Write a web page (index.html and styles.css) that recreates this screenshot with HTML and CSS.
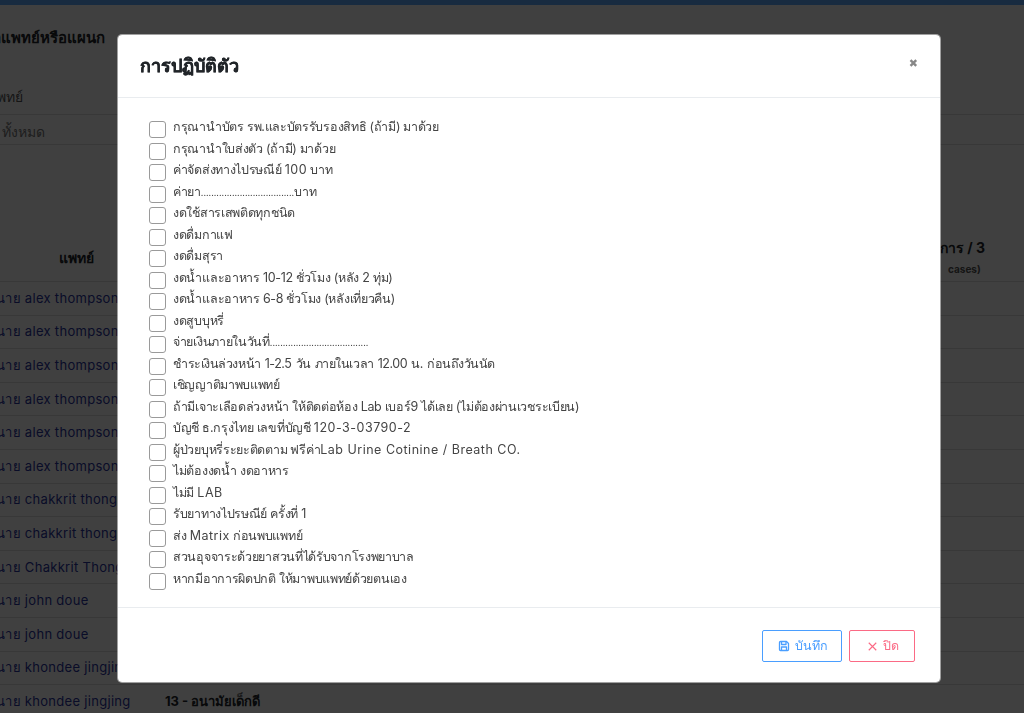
FILE: index.html
```html
<!DOCTYPE html>
<html lang="th">
<head>
    <meta charset="UTF-8">
    <meta name="viewport" content="width=device-width, initial-scale=1.0">
    <title>การปฏิบัติตัว</title>
    <link rel="stylesheet" href="styles.css">
</head>
<body>
    <div class="topbar"></div>
    <div class="page">
        <h4 class="filter-title">เลือกแพทย์หรือแผนก</h4>
        <div class="filter-label">แพทย์</div>
        <div class="filter-value">ทั้งหมด</div>

        <div class="table-head">
            <div class="col-doctor">แพทย์</div>
            <div class="col-place"></div>
            <div class="col-last">
                <div class="col-last-main">ค่าบริการ / 3</div>
                <div class="col-last-sub">cases)</div>
            </div>
        </div>
        <div class="row"><a class="col-doctor">นาย alex thompson</a></div>
        <div class="row"><a class="col-doctor">นาย alex thompson</a></div>
        <div class="row"><a class="col-doctor">นาย alex thompson</a></div>
        <div class="row"><a class="col-doctor">นาย alex thompson</a></div>
        <div class="row"><a class="col-doctor">นาย alex thompson</a></div>
        <div class="row"><a class="col-doctor">นาย alex thompson</a></div>
        <div class="row"><a class="col-doctor">นาย chakkrit thong</a></div>
        <div class="row"><a class="col-doctor">นาย chakkrit thong</a></div>
        <div class="row"><a class="col-doctor">นาย Chakkrit Thong</a></div>
        <div class="row"><a class="col-doctor">นาย john doue</a></div>
        <div class="row"><a class="col-doctor">นาย john doue</a></div>
        <div class="row"><a class="col-doctor">นาย khondee jingjing</a></div>
        <div class="row"><a class="col-doctor">นาย khondee jingjing</a><b class="col-place">13 - อนามัยเด็กดี</b></div>
    </div>

    <div class="backdrop"></div>
    <div class="modal">
        <div class="modal-header">
            <h5>การปฏิบัติตัว</h5>
            <span class="modal-close">&#10006;</span>
        </div>
        <div class="modal-body">
            <label class="check"><input type="checkbox"><span>กรุณานำบัตร รพ.และบัตรรับรองสิทธิ (ถ้ามี) มาด้วย</span></label>
            <label class="check"><input type="checkbox"><span>กรุณานำใบส่งตัว (ถ้ามี) มาด้วย</span></label>
            <label class="check"><input type="checkbox"><span>ค่าจัดส่งทางไปรษณีย์ <span class="latin">100</span> บาท</span></label>
            <label class="check"><input type="checkbox"><span>ค่ายา<span class="dots">....................................</span>บาท</span></label>
            <label class="check"><input type="checkbox"><span>งดใช้สารเสพติดทุกชนิด</span></label>
            <label class="check"><input type="checkbox"><span>งดดื่มกาแฟ</span></label>
            <label class="check"><input type="checkbox"><span>งดดื่มสุรา</span></label>
            <label class="check"><input type="checkbox"><span>งดน้ำและอาหาร 10-12 ชั่วโมง (หลัง 2 ทุ่ม)</span></label>
            <label class="check"><input type="checkbox"><span>งดน้ำและอาหาร 6-8 ชั่วโมง (หลังเที่ยวคืน)</span></label>
            <label class="check"><input type="checkbox"><span>งดสูบบุหรี่</span></label>
            <label class="check"><input type="checkbox"><span>จ่ายเงินภายในวันที่<span class="dots">......................................</span></span></label>
            <label class="check"><input type="checkbox"><span class="tight">ชำระเงินล่วงหน้า 1-2.5 วัน ภายในเวลา 12.00 น. ก่อนถึงวันนัด</span></label>
            <label class="check"><input type="checkbox"><span>เชิญญาติมาพบแพทย์</span></label>
            <label class="check"><input type="checkbox"><span>ถ้ามีเจาะเลือดล่วงหน้า ให้ติดต่อห้อง Lab เบอร์9 ได้เลย (ไม่ต้องผ่านเวชระเบียน)</span></label>
            <label class="check"><input type="checkbox"><span>บัญชี ธ.กรุงไทย เลขที่บัญชี <span class="latin">120-3-03790-2</span></span></label>
            <label class="check"><input type="checkbox"><span>ผู้ป่วยบุหรี่ระยะติดตาม ฟรีค่า<span class="latin">Lab Urine Cotinine / Breath CO.</span></span></label>
            <label class="check"><input type="checkbox"><span>ไม่ต้องงดน้ำ งดอาหาร</span></label>
            <label class="check"><input type="checkbox"><span>ไม่มี <span class="latin">LAB</span></span></label>
            <label class="check"><input type="checkbox"><span>รับยาทางไปรษณีย์ ครั้งที่ <span class="latin">1</span></span></label>
            <label class="check"><input type="checkbox"><span>ส่ง <span class="latin">Matrix</span> ก่อนพบแพทย์</span></label>
            <label class="check"><input type="checkbox"><span>สวนอุจจาระด้วยยาสวนที่ได้รับจากโรงพยาบาล</span></label>
            <label class="check"><input type="checkbox"><span>หากมีอาการผิดปกติ ให้มาพบแพทย์ด้วยตนเอง</span></label>
        </div>
        <div class="modal-footer">
            <button class="btn btn-save">
                <svg width="12" height="12" viewBox="0 0 24 24" fill="none" stroke="currentColor" stroke-width="2.6" stroke-linejoin="round"><path d="M3 5a2 2 0 0 1 2-2h12l4 4v12a2 2 0 0 1-2 2H5a2 2 0 0 1-2-2z"/><path d="M7 3v6h9V3"/><path d="M7 21v-7h10v7"/></svg>
                บันทึก
            </button>
            <button class="btn btn-close">
                <svg width="9" height="9" viewBox="0 0 12 12" fill="none" stroke="currentColor" stroke-width="1.5"><path d="M1 1l10 10M11 1L1 11"/></svg>
                ปิด
            </button>
        </div>
    </div>
</body>
</html>
```

FILE: styles.css
```css
* {
    box-sizing: border-box;
}
html, body {
    height: 100%;
}
body {
    margin: 0;
    overflow: hidden;
    font-family: Inter, "Noto Sans", "DejaVu Sans", sans-serif;
    font-size: 14px;
    color: #212529;
    background-color: #ffffff;
}
.topbar {
    height: 5px;
    background-color: #60acff;
}
.page {
    margin-left: -48px;
    padding-top: 23px;
}
.filter-title {
    margin: 0 0 39px;
    padding-left: 17px;
    font-size: 15px;
    font-weight: 700;
    line-height: 20px;
}
.filter-label {
    padding-left: 36px;
    line-height: 20px;
    height: 28px;
    border-bottom: 1px solid #dddddd;
    color: #555555;
}
.filter-value {
    padding: 6px 0 0 50px;
    height: 30px;
    border-bottom: 1px solid #dddddd;
    color: #777777;
}
.table-head {
    display: flex;
    margin-top: 73px;
    height: 64px;
    padding-top: 16px;
    border-bottom: 1px solid #dddddd;
    font-weight: 700;
    align-items: center;
}
.table-head .col-doctor {
    text-align: center;
    padding-right: 8px;
}
.col-doctor {
    display: block;
    width: 213px;
    padding-left: 44px;
    flex: none;
}
.col-place {
    flex: none;
    width: 775px;
    font-size: 13px;
}
.col-last {
    text-align: left;
    white-space: nowrap;
}
.col-last-main {
    margin-left: -34px;
    line-height: 22px;
}
.col-last-sub {
    font-size: 10px;
    line-height: 20px;
    color: #555555;
    margin-left: 8px;
}
.row {
    display: flex;
    align-items: center;
    height: 33.6px;
    border-bottom: 1px solid #dddddd;
    white-space: nowrap;
}
.row a {
    font-size: 13px;
    color: #2a34a0;
    letter-spacing: 0.3px;
}
.backdrop {
    position: fixed;
    inset: 0;
    background-color: rgba(0, 0, 0, 0.75);
}
.modal {
    position: fixed;
    top: 34px;
    left: 117px;
    width: 824px;
    height: 649px;
    display: flex;
    flex-direction: column;
    background-color: #ffffff;
    background-clip: padding-box;
    border: 1px solid rgba(255, 255, 255, 0.5);
    border-radius: 5px;
}
.modal-header {
    display: flex;
    justify-content: space-between;
    height: 63px;
    padding: 18px 22px;
    border-bottom: 1px solid #e9ecef;
}
.modal-header h5 {
    margin: 0;
    font-size: 18px;
    font-weight: 700;
    line-height: 26px;
    color: #212529;
    -webkit-text-stroke: 0.3px #212529;
}
.modal-close {
    font-size: 11px;
    line-height: 20px;
    color: #888888;
}
.modal-body {
    flex: 1;
    padding: 19px 31px 0;
}
.check {
    display: flex;
    align-items: flex-start;
    height: 21.52px;
    font-size: 12.5px;
    line-height: 20px;
    letter-spacing: -0.3px;
    color: #444444;
}
.check input {
    appearance: none;
    width: 17px;
    height: 17px;
    margin: 4px 7px 0 0;
    flex: none;
    background-color: #ffffff;
    border: 1px solid #9a9a9a;
    border-radius: 3px;
}
.latin {
    letter-spacing: 0.5px;
}
.dots {
    font-size: 9px;
    letter-spacing: 0;
}
.tight {
    letter-spacing: -0.45px;
    word-spacing: 1px;
}
.modal-footer {
    display: flex;
    justify-content: flex-end;
    gap: 7px;
    height: 75px;
    padding: 22px 25px 0 0;
    border-top: 1px solid #e9ecef;
}
.btn {
    display: flex;
    align-items: center;
    justify-content: center;
    gap: 5px;
    height: 32px;
    font-family: inherit;
    font-size: 12.5px;
    background-color: #ffffff;
    border-radius: 2px;
}
.btn-save {
    width: 80px;
    padding-left: 8px;
    color: #4a9eff;
    border: 1px solid #4a9eff;
}
.btn-close {
    width: 66px;
    padding-left: 8px;
    gap: 6px;
    color: #fb6a85;
    border: 1px solid #fb6a85;
}
```
